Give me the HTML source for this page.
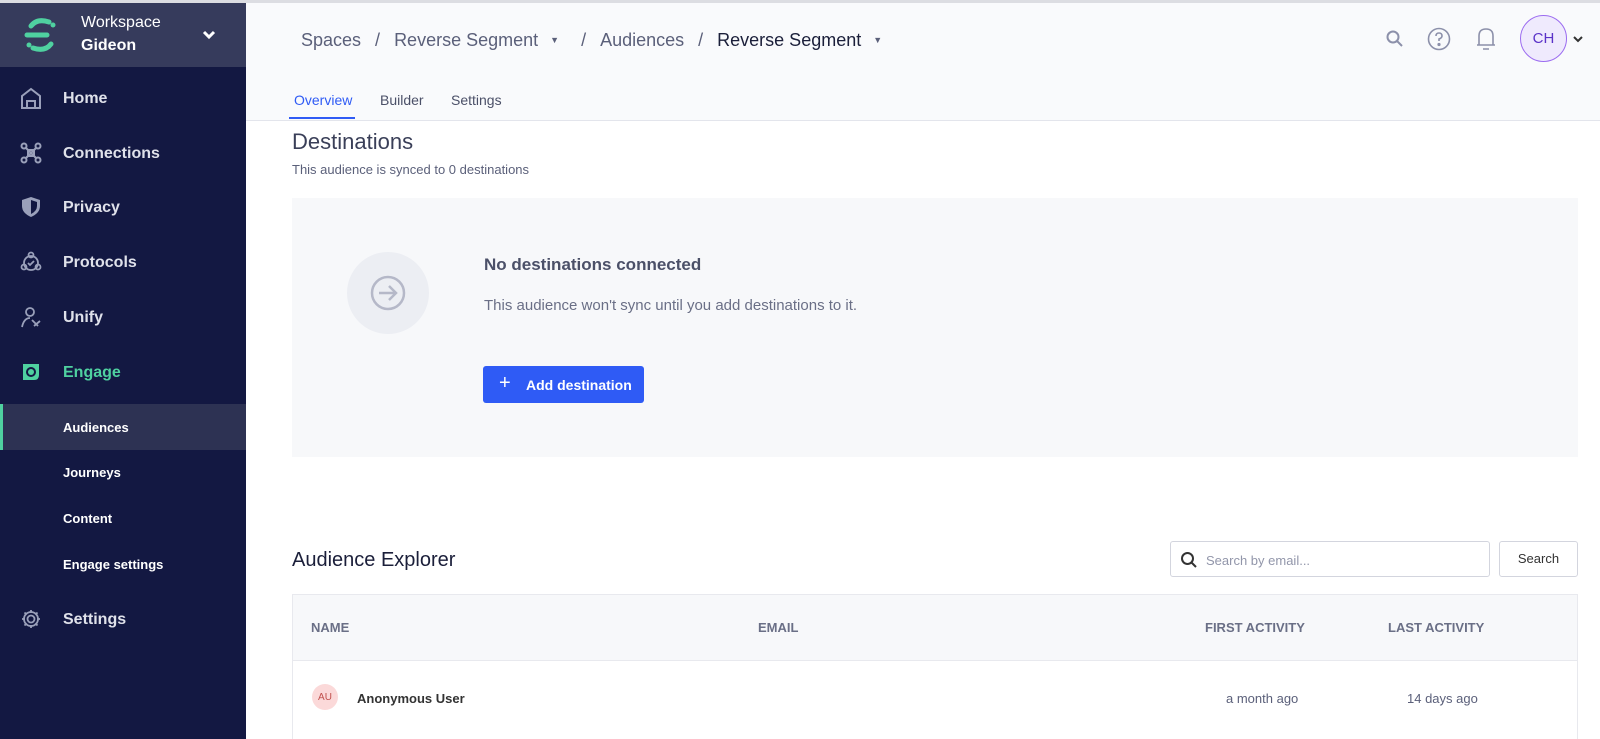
<!DOCTYPE html>
<html><head><meta charset="utf-8"><style>
*{box-sizing:border-box;margin:0;padding:0}
body{width:1600px;height:739px;overflow:hidden;font-family:"Liberation Sans",sans-serif;background:#fff;position:relative}
.top{position:absolute;left:0;top:0;width:1600px;height:3px;background:#dcdde2}
.sb{position:absolute;left:0;top:3px;width:246px;height:736px;background:#131842}
.ws{height:64px;background:#363b5c;position:relative;color:#fff}
.ws .l1{position:absolute;left:81px;top:11px;font-size:16px}
.ws .l2{position:absolute;left:81px;top:34px;font-size:16px;font-weight:bold}
.nav{position:absolute;left:0;width:246px;color:#dfe1ea;font-size:16px;font-weight:bold}
.nav span{position:absolute;left:63px}
.nav svg{position:absolute;left:20px;top:-3px}
.sub{position:absolute;left:63px;color:#fff;font-size:13px;font-weight:bold}
.hdr{position:absolute;left:246px;top:3px;width:1354px;height:118px;background:#f9fafc;border-bottom:1px solid #e3e5ec}
.bc{position:absolute;top:27px;left:55px;font-size:18px;color:#5b607a;white-space:nowrap}
.bc .c{font-size:9px;vertical-align:3px;margin:0 22px 0 12px}
.bc .s{margin:0 14px}
.tab{position:absolute;top:89px;font-size:14px;color:#4b5068}
h2{position:absolute;left:292px;top:129px;font-size:22px;font-weight:normal;color:#3a3f58}
.card{position:absolute;left:292px;top:198px;width:1286px;height:259px;background:#f7f8fa}
.btn{position:absolute;left:483px;top:366px;width:161px;height:37px;background:#2f5bf5;border-radius:3px;color:#fff;font-size:14px;font-weight:bold}
.tbl{position:absolute;left:292px;top:594px;width:1286px;height:145px;border:1px solid #e8e9ee;border-bottom:none}
.th{position:absolute;top:620px;font-size:13px;color:#6a6f86;font-weight:bold}
</style></head><body>
<div class="top"></div>
<div class="sb">
 <div class="ws">
  <svg style="position:absolute;left:23px;top:13px" width="36" height="38" viewBox="0 0 36 38" fill="none" stroke="#4fd1a0" stroke-width="5" stroke-linecap="round"><path d="M26 6 Q14 2 8 10"/><circle cx="30" cy="9" r="2.5" fill="#4fd1a0" stroke="none"/><path d="M4 19 H24"/><path d="M10 32 Q22 36 28 28"/><circle cx="6" cy="29" r="2.5" fill="#4fd1a0" stroke="none"/></svg>
  <div class="l1">Workspace</div><div class="l2">Gideon</div>
  <svg style="position:absolute;left:202px;top:27px" width="14" height="10" viewBox="0 0 14 10"><path d="M2 2 L7 7 L12 2" stroke="#fff" stroke-width="3" fill="none"/></svg>
 </div>
</div>
<div class="nav" style="top:90px"><svg width="22" height="22" viewBox="0 0 22 22" fill="none" stroke="#9aa0ba" stroke-width="2"><path d="M2 9 L11 2 L20 9 V21 H2Z M7 21 V14 H15 V21"/></svg><span>Home</span></div>
<div class="nav" style="top:145px"><svg width="22" height="22" viewBox="0 0 22 22" fill="none" stroke="#9aa0ba" stroke-width="2"><circle cx="4" cy="4" r="2.5"/><circle cx="18" cy="4" r="2.5"/><circle cx="4" cy="18" r="2.5"/><circle cx="18" cy="18" r="2.5"/><path d="M6 6 L16 16 M16 6 L6 16"/><rect x="8" y="8" width="6" height="6"/></svg><span>Connections</span></div>
<div class="nav" style="top:199px"><svg width="22" height="22" viewBox="0 0 22 22"><path d="M11 1 L20 4 V10 Q20 17 11 21 Q2 17 2 10 V4Z" fill="#9aa0ba"/><path d="M11 4 V18 Q17 15 17 10 V6Z" fill="#131842"/></svg><span>Privacy</span></div>
<div class="nav" style="top:254px"><svg width="22" height="22" viewBox="0 0 22 22" fill="none" stroke="#9aa0ba" stroke-width="1.8"><circle cx="11" cy="12" r="7"/><circle cx="11" cy="4" r="2.5"/><circle cx="4" cy="16" r="2.5"/><circle cx="18" cy="16" r="2.5"/><path d="M8 12 L10 14 L14 10"/></svg><span>Protocols</span></div>
<div class="nav" style="top:309px"><svg width="22" height="22" viewBox="0 0 22 22" fill="none" stroke="#9aa0ba" stroke-width="1.8"><circle cx="10" cy="6" r="4"/><path d="M2 21 Q4 12 10 12 M12 14 L18 20 M14 20 L20 15"/></svg><span>Unify</span></div>
<div class="nav" style="top:364px;color:#4fd1a0"><svg width="22" height="22" viewBox="0 0 22 22"><path d="M3 3 H19 V14 Q19 19 14 19 H3Z" fill="#4fd1a0"/><circle cx="11" cy="11" r="5" fill="#131842"/><circle cx="11" cy="11" r="3" fill="#4fd1a0"/></svg><span>Engage</span></div>
<div style="position:absolute;left:0;top:404px;width:246px;height:46px;background:#2d3253;border-left:3px solid #4fd1a0"></div>
<div class="sub" style="top:420px">Audiences</div>
<div class="sub" style="top:465px">Journeys</div>
<div class="sub" style="top:511px">Content</div>
<div class="sub" style="top:557px">Engage settings</div>
<div class="nav" style="top:611px"><svg width="22" height="22" viewBox="0 0 22 22" fill="none" stroke="#9aa0ba" stroke-width="1.8"><circle cx="11" cy="11" r="3.5"/><path d="M11 2 V5 M11 17 V20 M2 11 H5 M17 11 H20 M4.5 4.5 L6.7 6.7 M15.3 15.3 L17.5 17.5 M4.5 17.5 L6.7 15.3 M15.3 6.7 L17.5 4.5"/><circle cx="11" cy="11" r="7"/></svg><span>Settings</span></div>

<div class="hdr">
 <div class="bc">Spaces<span class="s">/</span>Reverse Segment<span class="c">▼</span>/<span class="s">Audiences</span>/<span class="s" style="color:#1b1f3a;margin-right:0">Reverse Segment</span><span class="c">▼</span></div>
 <svg style="position:absolute;left:1139px;top:26px" width="20" height="20" viewBox="0 0 20 20" fill="none" stroke="#8c90aa" stroke-width="2"><circle cx="8" cy="8" r="5.5"/><path d="M12 12 L17 17"/></svg>
 <svg style="position:absolute;left:1181px;top:24px" width="24" height="24" viewBox="0 0 24 24" fill="none" stroke="#8c90aa" stroke-width="1.6"><circle cx="12" cy="12" r="10.5"/><path d="M9 9 Q9 6 12 6 Q15 6 15 9 Q15 11 12 12 V14"/><circle cx="12" cy="17.5" r="0.8" fill="#8c90aa"/></svg>
 <svg style="position:absolute;left:1228px;top:23px" width="24" height="26" viewBox="0 0 24 26" fill="none" stroke="#8c90aa" stroke-width="1.6"><path d="M5 19 V10 Q5 3 12 3 Q19 3 19 10 V19 H3 H21 M9 23 H15"/></svg>
 <div style="position:absolute;left:1274px;top:12px;width:47px;height:47px;border-radius:50%;border:1.5px solid #9b6bf0;background:#efeafd;color:#5a32c8;font-size:15px;display:flex;align-items:center;justify-content:center">CH</div>
 <svg style="position:absolute;left:1327px;top:33px" width="10" height="7" viewBox="0 0 10 7"><path d="M1 1 L5 5 L9 1" stroke="#333" stroke-width="2" fill="none"/></svg>
 <div class="tab" style="left:48px;color:#2f5bf5">Overview</div>
 <div style="position:absolute;left:43px;top:114px;width:66px;height:2px;background:#2f5bf5"></div>
 <div class="tab" style="left:134px">Builder</div>
 <div class="tab" style="left:205px">Settings</div>
</div>

<h2>Destinations</h2>
<div style="position:absolute;left:292px;top:162px;font-size:13px;color:#5b607a">This audience is synced to 0 destinations</div>
<div class="card">
 <div style="position:absolute;left:55px;top:54px;width:82px;height:82px;border-radius:50%;background:#eceef3"></div>
 <svg style="position:absolute;left:77px;top:76px" width="38" height="38" viewBox="0 0 38 38" fill="none" stroke="#b5b8c8" stroke-width="2.5"><circle cx="19" cy="19" r="16"/><path d="M10 19 H27 M20 12 L27 19 L20 26"/></svg>
 <div style="position:absolute;left:192px;top:57px;font-size:17px;color:#4b5068;font-weight:bold">No destinations connected</div>
 <div style="position:absolute;left:192px;top:99px;font-size:15px;color:#6a6f86">This audience won't sync until you add destinations to it.</div>
</div>
<div class="btn"><span style="position:absolute;left:16px;top:6px;font-size:20px;font-weight:normal">+</span><span style="position:absolute;left:43px;top:11px">Add destination</span></div>

<div style="position:absolute;left:292px;top:549px;font-size:20px;color:#1b1f3a">Audience Explorer</div>
<div style="position:absolute;left:1170px;top:541px;width:320px;height:36px;border:1px solid #d3d5de;border-radius:3px;background:#fff">
 <svg style="position:absolute;left:9px;top:9px" width="18" height="18" viewBox="0 0 18 18" fill="none" stroke="#333" stroke-width="2"><circle cx="7.5" cy="7.5" r="5.5"/><path d="M11.5 11.5 L16 16"/></svg>
 <span style="position:absolute;left:35px;top:11px;font-size:13px;color:#9296aa">Search by email...</span>
</div>
<div style="position:absolute;left:1499px;top:541px;width:79px;height:36px;border:1px solid #d3d5de;border-radius:3px;background:#fff;font-size:13px;color:#333;text-align:center;line-height:34px">Search</div>
<div class="tbl"><div style="height:66px;background:#f7f8fa;border-bottom:1px solid #e8e9ee"></div></div>
<div class="th" style="left:311px">NAME</div>
<div class="th" style="left:758px">EMAIL</div>
<div class="th" style="left:1205px">FIRST ACTIVITY</div>
<div class="th" style="left:1388px">LAST ACTIVITY</div>
<div style="position:absolute;left:312px;top:684px;width:26px;height:26px;border-radius:50%;background:#fbd9d9;color:#c0504d;font-size:10px;display:flex;align-items:center;justify-content:center">AU</div>
<div style="position:absolute;left:357px;top:691px;font-size:13px;color:#333;font-weight:bold">Anonymous User</div>
<div style="position:absolute;left:1226px;top:691px;font-size:13px;color:#5b607a">a month ago</div>
<div style="position:absolute;left:1407px;top:691px;font-size:13px;color:#5b607a">14 days ago</div>
</body></html>
